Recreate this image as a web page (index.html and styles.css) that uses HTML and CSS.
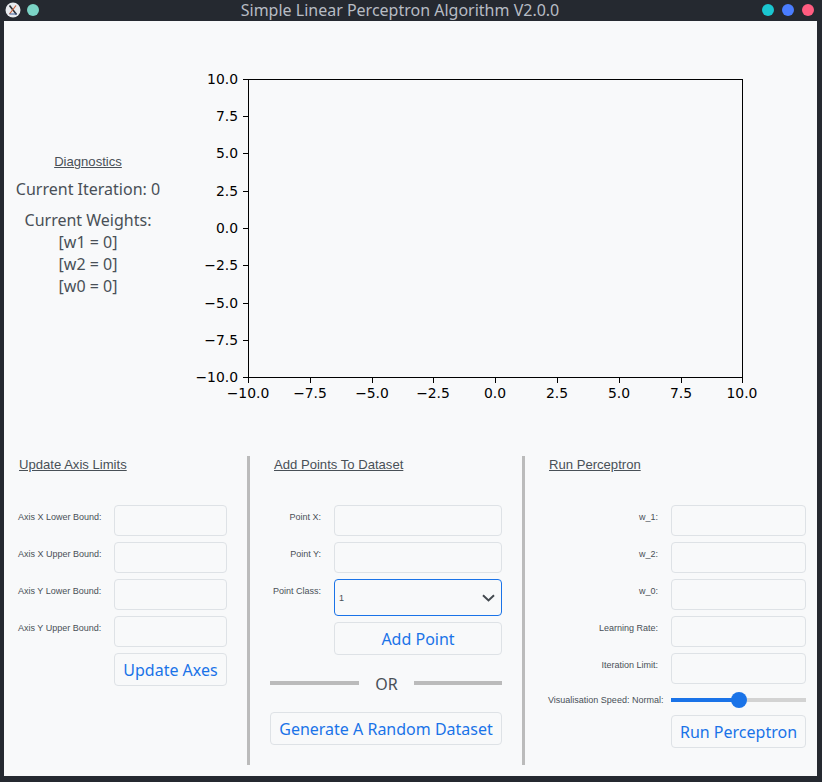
FILE: index.html
```html
<!doctype html>
<html lang="en">
<head>
	<meta charset="UTF-8" />
	<title>Simple Linear Perceptron Algorithm V2.0.0</title>
	<link rel="stylesheet" href="styles.css">
</head>
<body>
	<!--title bar-->
	<div class="titlebar">
		<div class="title-left">
			<svg class="app-icon" width="16" height="16" viewBox="0 0 16 16">
				<circle cx="8" cy="8" r="7.5" fill="#e8ebef"/>
				<path d="M4.5 3.5 L11.5 12.5" stroke="#2b2f36" stroke-width="1.6" fill="none"/>
				<path d="M11 3.5 L4.5 12" stroke="#c8603a" stroke-width="1.2" fill="none"/>
				<path d="M4.5 12 H11.5" stroke="#3f5f9a" stroke-width="1" fill="none"/>
			</svg>
			<span class="dot dot-mint"></span>
		</div>
		<div class="title-text">Simple Linear Perceptron Algorithm V2.0.0</div>
		<div class="title-right">
			<span class="dot dot-cyan"></span>
			<span class="dot dot-blue"></span>
			<span class="dot dot-pink"></span>
		</div>
	</div>

	<div class="window">
		<!--diagnostics + plot-->
		<div class="top">
			<div class="diagnostics">
				<div class="heading">Diagnostics</div>
				<div class="iter">Current Iteration: 0</div>
				<div class="weights">
					<div>Current Weights:</div>
					<div>[w1 = 0]</div>
					<div>[w2 = 0]</div>
					<div>[w0 = 0]</div>
				</div>
			</div>
			<svg class="plot" width="645" height="414" viewBox="172 21 645 414">
				<rect x="248.5" y="79.5" width="494" height="298" fill="none" stroke="#000" stroke-width="1"/>
				<g stroke="#000" stroke-width="1">
					<path d="M243 79.5H248M243 116.5H248M243 153.5H248M243 191.5H248M243 228.5H248M243 265.5H248M243 303.5H248M243 340.5H248M243 377.5H248"/>
					<path d="M248.5 378V383M310.5 378V383M372.5 378V383M433.5 378V383M495.5 378V383M557.5 378V383M619.5 378V383M681.5 378V383M742.5 378V383"/>
				</g>
				<g class="tick" text-anchor="end">
					<text x="238" y="84">10.0</text>
					<text x="238" y="121">7.5</text>
					<text x="238" y="158">5.0</text>
					<text x="238" y="196">2.5</text>
					<text x="238" y="233">0.0</text>
					<text x="238" y="270">−2.5</text>
					<text x="238" y="308">−5.0</text>
					<text x="238" y="345">−7.5</text>
					<text x="238" y="382">−10.0</text>
				</g>
				<g class="tick" text-anchor="middle">
					<text x="248" y="398">−10.0</text>
					<text x="310" y="398">−7.5</text>
					<text x="372" y="398">−5.0</text>
					<text x="433" y="398">−2.5</text>
					<text x="495" y="398">0.0</text>
					<text x="557" y="398">2.5</text>
					<text x="619" y="398">5.0</text>
					<text x="681" y="398">7.5</text>
					<text x="742" y="398">10.0</text>
				</g>
			</svg>
		</div>

		<!--control panels-->
		<div class="bottom">
			<div class="panel panel-axis">
				<div class="heading panel-head">Update Axis Limits</div>
				<div class="form">
					<label>Axis X Lower Bound:</label><input type="text">
					<label>Axis X Upper Bound:</label><input type="text">
					<label>Axis Y Lower Bound:</label><input type="text">
					<label>Axis Y Upper Bound:</label><input type="text">
					<span></span><button>Update Axes</button>
				</div>
			</div>
			<div class="divider"></div>
			<div class="panel panel-points">
				<div class="heading panel-head">Add Points To Dataset</div>
				<div class="form">
					<label>Point X:</label><input type="text">
					<label>Point Y:</label><input type="text">
					<label>Point Class:</label>
					<select>
						<option>1</option>
						<option>-1</option>
					</select>
					<span></span><button>Add Point</button>
				</div>
				<div class="or-row">
					<span class="or-line"></span>
					<span class="or-text">OR</span>
					<span class="or-line or-line-right"></span>
				</div>
				<button class="wide">Generate A Random Dataset</button>
			</div>
			<div class="divider"></div>
			<div class="panel panel-run">
				<div class="heading panel-head">Run Perceptron</div>
				<div class="form">
					<label>w_1:</label><input type="text">
					<label>w_2:</label><input type="text">
					<label>w_0:</label><input type="text">
					<label>Learning Rate:</label><input type="text">
					<label>Iteration Limit:</label><input type="text">
					<label class="speed-label">Visualisation Speed: Normal:</label>
					<input class="speed" type="range" min="0" max="100" value="50">
					<span></span><button>Run Perceptron</button>
				</div>
			</div>
		</div>
	</div>
</body>
</html>
```
FILE: styles.css
```css
* {
    box-sizing: border-box;
    margin: 0;
    padding: 0;
}

body {
    width: 822px;
    height: 782px;
    overflow: hidden;
    background: #252930;
    font-family: "Noto Sans", sans-serif;
}

/* title bar */
.titlebar {
    height: 21px;
    display: flex;
    align-items: center;
    justify-content: space-between;
    padding: 0 8px 1px 5px;
    position: relative;
}

.title-left,
.title-right {
    display: flex;
    align-items: center;
}

.title-left {
    gap: 6px;
}

.title-right {
    gap: 8px;
}

.dot {
    width: 12px;
    height: 12px;
    border-radius: 50%;
}

.dot-mint { background: #7bd4c6; }
.dot-cyan { background: #1ac6d0; }
.dot-blue { background: #4a7dff; }
.dot-pink { background: #ff5c80; }

.title-text {
    position: absolute;
    left: 0;
    right: 0;
    text-align: center;
    font-size: 16px;
    line-height: 20px;
    color: #b7bcc4;
    padding-right: 22px;
}

/* main window */
.window {
    margin: 0 5px 0 4px;
    width: 813px;
    height: 755px;
    background: #f8f9fa;
}

.top {
    display: flex;
    height: 414px;
}

.diagnostics {
    width: 168px;
    padding-top: 133px;
    text-align: center;
    font-size: 16px;
    color: #495057;
}

.heading {
    font-family: "Liberation Sans", sans-serif;
    font-size: 13.1px;
    line-height: 15px;
    text-decoration: underline;
    color: #495057;
}

.iter {
    margin-top: 9px;
    line-height: 22px;
}

.weights {
    margin-top: 9px;
    line-height: 22px;
}

.plot {
    display: block;
    flex: none;
}

.tick {
    font-family: "DejaVu Sans", sans-serif;
    font-size: 13.9px;
    fill: #000;
}

/* bottom panels */
.bottom {
    display: flex;
    padding-top: 21px;
}

.divider {
    width: 3px;
    height: 309px;
    background: #bbb;
    flex: none;
}

.panel-axis {
    width: 243px;
    padding-left: 14px;
}

.panel-points {
    width: 272px;
    padding-left: 20px;
}

.panel-run {
    width: 292px;
    padding-left: 23px;
}

.panel-head {
    height: 49px;
    padding-top: 1px;
}

.panel-axis .panel-head { padding-left: 1px; }
.panel-points .panel-head { padding-left: 4px; }
.panel-run .panel-head { padding-left: 1px; }

.form {
    display: grid;
    row-gap: 6px;
    align-items: start;
}

.panel-axis .form { grid-template-columns: 96px 113px; }
.panel-points .form { grid-template-columns: 64px 168px; }
.panel-run .form { grid-template-columns: 123px 135px; }

label {
    font-family: "Liberation Sans", sans-serif;
    font-size: 9px;
    line-height: 10px;
    padding-top: 7px;
    color: #495057;
}

.panel-points label,
.panel-run label {
    text-align: right;
    padding-right: 13px;
}

.panel-run .speed-label {
    padding-top: 5px;
    padding-right: 8px;
    white-space: nowrap;
}

input[type="text"] {
    height: 31px;
    background: transparent;
    border: 1px solid #dee2e6;
    border-radius: 4px;
}

select {
    appearance: none;
    height: 37px;
    padding-left: 4px;
    font-family: "Liberation Sans", sans-serif;
    font-size: 9px;
    color: #495057;
    border: 1px solid #1a73e8;
    border-radius: 4px;
    background-color: transparent;
    background-image: url("data:image/svg+xml,%3Csvg xmlns='http://www.w3.org/2000/svg' width='13' height='8' viewBox='0 0 13 8'%3E%3Cpath d='M1 1.2 6.5 6.4 12 1.2' fill='none' stroke='%2343494f' stroke-width='2'/%3E%3C/svg%3E");
    background-repeat: no-repeat;
    background-position: right 6px center;
}

button {
    height: 33px;
    background: transparent;
    border: 1px solid #dee2e6;
    border-radius: 4px;
    font-family: "Noto Sans", sans-serif;
    font-size: 16px;
    color: #1a73e8;
}

.or-row {
    display: flex;
    align-items: center;
    width: 232px;
    height: 57px;
}

.or-line {
    height: 4px;
    margin-bottom: 1px;
    background: #bbb;
    width: 89px;
    flex: none;
}

.or-line-right {
    width: 88px;
}

.or-text {
    flex: 1;
    text-align: center;
    font-size: 16px;
    color: #495057;
}

.wide {
    width: 232px;
    display: block;
}

/* slider */
.speed {
    appearance: none;
    height: 19px;
    width: 135px;
    background: transparent;
}

.speed::-webkit-slider-runnable-track {
    height: 4px;
    background: linear-gradient(to right, #1a73e8 50%, #d3d3d3 50%);
}

.speed::-webkit-slider-thumb {
    appearance: none;
    width: 16px;
    height: 16px;
    margin-top: -6px;
    border-radius: 50%;
    background: #1a73e8;
}
```
